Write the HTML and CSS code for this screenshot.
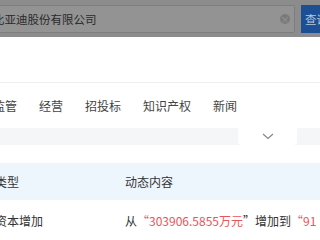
FILE: index.html
```html
<!DOCTYPE html>
<html>

<head>
    <meta charset='utf-8'>
    <title>企业变更记录</title>
    <link rel="stylesheet" href="styles.css">
</head>

<body>
    <div class="search">
        <div class="search-box">
            <span class="search-text">比亚迪股份有限公司</span>
            <span class="clear">&times;</span>
        </div>
        <div class="search-btn">查询</div>
    </div>

    <div class="blank"></div>

    <div class="tabs">
        <span>监管</span>
        <span>经营</span>
        <span>招投标</span>
        <span>知识产权</span>
        <span>新闻</span>
    </div>

    <div class="fold">
        <div class="fold-btn">
            <svg width="12" height="7" viewBox="0 0 12 7">
                <path d="M1 1 L6 5.5 L11 1" fill="none" stroke="#888" stroke-width="1.3" />
            </svg>
        </div>
    </div>

    <div class="gap"></div>

    <div class="row head">
        <div class="col-type">变更类型</div>
        <div class="col-content">动态内容</div>
    </div>
    <div class="row">
        <div class="col-type">注册资本增加</div>
        <div class="col-content">从<em>“303906.5855万元</em>”增加到<em>“91</em></div>
    </div>
</body>
</html>
```

FILE: styles.css
```css
body {
    margin: 0;
    width: 320px;
    height: 240px;
    overflow: hidden;
    background: #fff;
    font-family: "Noto Sans CJK SC", "Noto Sans", sans-serif;
    color: #333;
}

.search {
    display: flex;
    gap: 6px;
    height: 37px;
    padding-top: 5px;
    box-sizing: border-box;
    background: #8c8c8c;
}

.search-box {
    display: flex;
    align-items: center;
    justify-content: space-between;
    width: 303px;
    flex-shrink: 0;
    margin-left: -8px;
    height: 28px;
    box-sizing: border-box;
    border: 1px solid #7e7e7e;
    border-radius: 2px;
    background: #939393;
    overflow: hidden;
}

.search-text {
    font-size: 11.5px;
    color: #2a2a2a;
    margin-left: 0;
    white-space: nowrap;
}

.clear {
    display: flex;
    align-items: center;
    justify-content: center;
    width: 10px;
    height: 10px;
    margin-right: 4px;
    border-radius: 50%;
    background: #7a7a7a;
    color: #999;
    font-size: 9px;
    line-height: 1;
}

.search-btn {
    width: 40px;
    height: 28px;
    flex-shrink: 0;
    background: #1c4f93;
    color: #b8c7dc;
    font-size: 11.5px;
    line-height: 28px;
    padding-left: 4px;
    box-sizing: border-box;
    white-space: nowrap;
}

.blank {
    height: 45px;
    border-bottom: 1px solid #eee;
}

.tabs {
    display: flex;
    align-items: center;
    gap: 22px;
    height: 45px;
    margin-left: -7px;
    font-size: 12px;
    color: #444;
    white-space: nowrap;
}

.fold {
    height: 17px;
    background: #f5f6f7;
}

.fold-btn {
    display: flex;
    align-items: center;
    justify-content: center;
    width: 59px;
    height: 17px;
    margin-left: 238px;
    background: #fff;
    border-radius: 0 0 4px 4px;
}

.gap {
    height: 18px;
}

.row {
    display: flex;
    align-items: center;
    height: 40px;
    font-size: 12px;
    white-space: nowrap;
    color: #333;
}

.row.head {
    height: 37px;
    background: #eef6fd;
}

.col-type {
    width: 130px;
    margin-left: -29px;
    flex-shrink: 0;
}

.col-content {
    margin-left: 24px;
}

.col-content em {
    font-style: normal;
    color: #e9545a;
}
```
